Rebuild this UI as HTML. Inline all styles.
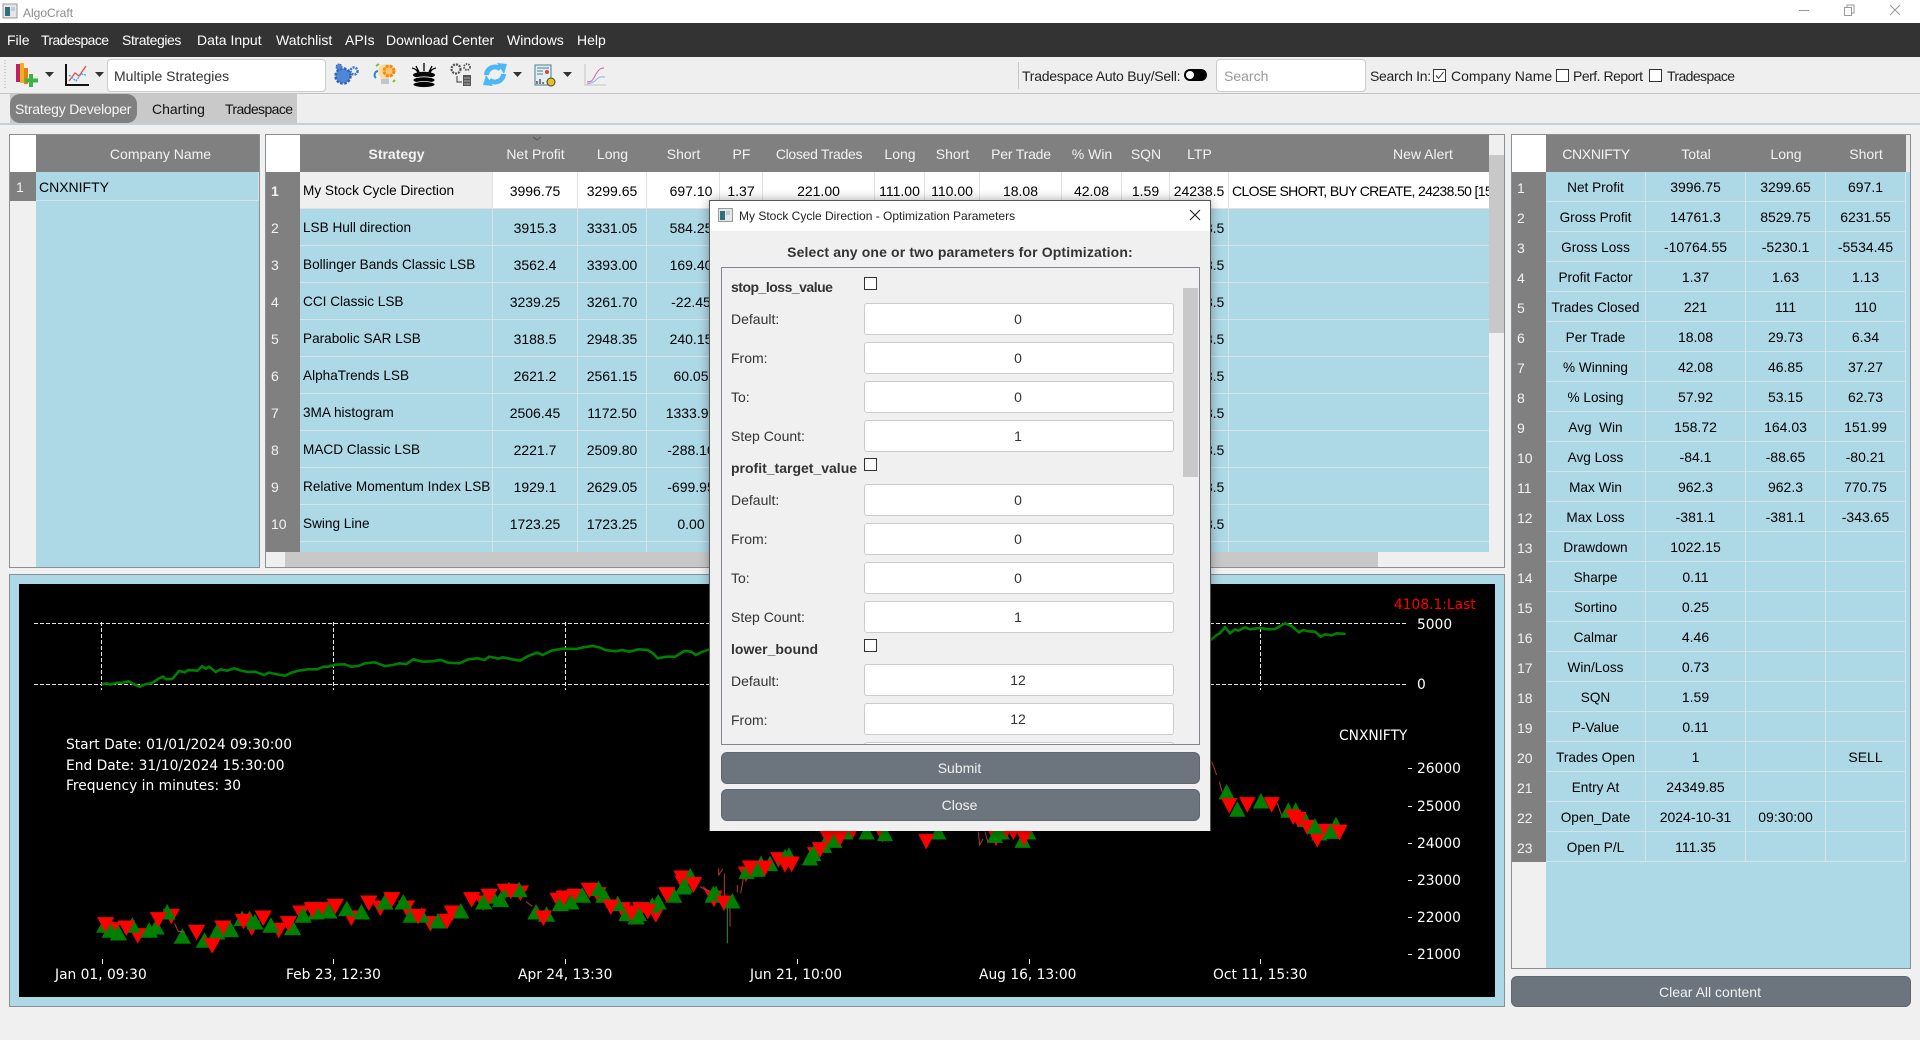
<!DOCTYPE html>
<html lang="en">
<head>
<meta charset="utf-8">
<title>AlgoCraft</title>
<style>
html,body{margin:0;padding:0;width:1920px;height:1040px;overflow:hidden;background:#f0f0f0;font-family:"Liberation Sans",sans-serif;font-size:14px;color:#000}
*{box-sizing:border-box}
.a{position:absolute;white-space:nowrap}
.m{position:absolute;top:32px;color:#fff;line-height:16px}
.t{position:absolute;line-height:16px;white-space:nowrap;color:#222}
table{border-collapse:separate;border-spacing:0;table-layout:fixed;position:absolute;left:0;top:0}
th{background:#808080;color:#f2f2f2;font-weight:normal;height:37px;padding:0;overflow:hidden;white-space:nowrap}
td{background:#add8e6;text-align:center;padding:1px 0 0;overflow:hidden;white-space:nowrap;border-right:1px solid #d6e4e9;border-bottom:1px solid #d6e4e9;color:#000}
td.h{background:#808080;color:#f2f2f2;text-align:left;padding-left:5px;border:0}
td.l{text-align:left;padding-left:3px;font-size:13.6px}
td.al{text-align:left;padding-left:3px;letter-spacing:-.65px}
.s td{height:37px}
.s td:nth-child(5){padding-left:16px}
.s tr.w td{background:#fff;border-color:#e2e2e2}
.s tr.w td.g{background:#efefef}
.s tr.w td.h{background:#808080;font-weight:bold}
.r td{height:30px}
.r td:nth-child(2){font-size:13.6px}
.d{position:absolute;background:#fff;border:1px solid #ccc;border-radius:3px;width:310px;height:32px;left:142px;padding-right:2px;text-align:center;line-height:31px;color:#333}
.lb{position:absolute;left:9px;color:#333;line-height:16px}
.b{font-weight:bold}
.c{position:absolute;left:142px;width:13px;height:13px;border:1px solid #333;background:#fff}
.btn{position:absolute;background:#6c757d;border:1px solid #5f666d;border-radius:6px;color:#f0f0f0;text-align:center;line-height:30px;height:32px;padding-right:2px}
.ck{position:absolute;top:69px;width:13px;height:13px;border:1px solid #333;background:#fff}
.ct{position:absolute;color:#fff;font-family:"DejaVu Sans",sans-serif;font-size:13.8px;line-height:16px;white-space:nowrap}
.tri path[fill="#f00"]{stroke:#f00;stroke-width:1;vector-effect:non-scaling-stroke}
.tri path[fill="#008000"]{stroke:#008000;stroke-width:1;vector-effect:non-scaling-stroke}
</style>
</head>
<body>

<!-- Title bar -->
<div class="a" style="left:0;top:0;width:1920px;height:28px;background:#fff"></div>
<svg class="a" style="left:0;top:0" width="1920" height="125" viewBox="0 0 1920 125">
  <rect x="3" y="4" width="14" height="14" fill="#e6e6e6" stroke="#999"/><rect x="5" y="7" width="5" height="9" fill="#2f6f7f"/><rect x="11" y="7" width="4" height="4" fill="#bcd"/>
  <path d="M1799 10.500h10" stroke="#999" fill="none"/>
  <path d="M1844.500 7.500h7v8h-7zM1847 7.500v-2.500h7v8h-2.500" stroke="#999" fill="none"/>
  <path d="M1890 5l10 10M1900 5l-10 10" stroke="#999" fill="none"/>
</svg>
<div class="a" style="left:23px;top:5px;font-size:12px;line-height:16px;color:#8a8a8a">AlgoCraft</div>
<div class="a" style="left:0;top:23px;width:1920px;height:34px;background:#333"></div>
<div class="m" style="left:7px">File</div>
<div class="m" style="left:41px;letter-spacing:-.6px">Tradespace</div>
<div class="m" style="left:122px;letter-spacing:-.4px">Strategies</div>
<div class="m" style="left:197px">Data Input</div>
<div class="m" style="left:276px">Watchlist</div>
<div class="m" style="left:345px">APIs</div>
<div class="m" style="left:386px">Download Center</div>
<div class="m" style="left:507px">Windows</div>
<div class="m" style="left:577px">Help</div>

<!-- Toolbar -->
<div class="a" style="left:0;top:57px;width:1920px;height:37px;background:#efefef;border-bottom:1px solid #c4c4c4"></div>
<div class="a" style="left:0;top:94px;width:1920px;height:29px;background:#eeeeee"></div>
<div class="a" style="left:0;top:123px;width:1920px;height:2px;background:#c8ced2"></div>
<div class="a" style="left:10px;top:94px;width:287px;height:29px;background:#c9c9c9"></div>
<div class="a" style="left:10px;top:94px;width:127px;height:29px;background:#808080;border-radius:10px"></div>
<div class="t" style="left:15px;top:101px;color:#f5f5f5;letter-spacing:-.2px">Strategy Developer</div>
<div class="t" style="left:152px;top:101px;color:#111">Charting</div>
<div class="t" style="left:225px;top:101px;color:#111;letter-spacing:-.6px">Tradespace</div>

<div class="a" style="left:107px;top:59px;width:219px;height:33px;background:#fff;border:1px solid #ccc;border-radius:4px"></div>
<div class="t" style="left:114px;top:68px;color:#333">Multiple Strategies</div>
<div class="a" style="left:1018px;top:62px;width:1px;height:27px;background:#c8c8c8"></div>
<div class="t" style="left:1022px;top:68px;letter-spacing:-.25px">Tradespace Auto Buy/Sell:</div>
<div class="a" style="left:1184px;top:69px;width:23px;height:12px;background:#000;border-radius:6px"></div>
<div class="a" style="left:1186px;top:71px;width:8px;height:8px;background:#fff;border-radius:50%"></div>
<div class="a" style="left:1216px;top:59px;width:150px;height:33px;background:#fff;border:1px solid #ccc;border-radius:4px"></div>
<div class="t" style="left:1224px;top:68px;color:#999">Search</div>
<div class="t" style="left:1370px;top:68px;letter-spacing:-.3px">Search In:</div>
<div class="ck" style="left:1433px"></div>
<svg class="a" style="left:1433px;top:69px" width="13" height="13"><path d="M3 6.500l2.500 3 5-6.500" stroke="#333" fill="none"/></svg>
<div class="t" style="left:1451px;top:68px">Company Name</div>
<div class="ck" style="left:1556px"></div>
<div class="t" style="left:1573px;top:68px;letter-spacing:-.5px">Perf. Report</div>
<div class="ck" style="left:1649px"></div>
<div class="t" style="left:1667px;top:68px;letter-spacing:-.6px">Tradespace</div>

<svg class="a" style="left:0;top:0" width="700" height="100" viewBox="0 0 700 100">
  <path d="M5 60v30" stroke="#aaa" stroke-dasharray="1 2" fill="none"/>
  <!-- bars plus -->
  <rect x="16" y="64" width="4" height="18" fill="#c0206a"/><rect x="20" y="63" width="4" height="20" fill="#e9b51b"/><rect x="24" y="68" width="4" height="16" fill="#ea7d20"/>
  <path d="M31 74v13M25 80.500h13" stroke="#3bb34a" stroke-width="4" fill="none"/>
  <path d="M45 72h9l-4.500 5zM95 72h9l-4.500 5zM513 72h9l-4.500 5zM563 72h9l-4.500 5z" fill="#333"/>
  <!-- line chart -->
  <path d="M66 64v21h23" stroke="#111" stroke-width="2" fill="none"/>
  <path d="M69 81l6-8 4 3 7-10" stroke="#e34b4b" stroke-width="1.300" fill="none"/>
  <path d="M69 75l7 6 5-7 5 1" stroke="#3aa5e0" stroke-width="1.300" stroke-dasharray="2 1" fill="none"/>
  <!-- gears blue -->
  <circle cx="343" cy="76" r="7.500" fill="#4f86d6" stroke="#2f63b8" stroke-width="2.500" stroke-dasharray="2.500 1.500"/>
  <circle cx="339" cy="67" r="3" fill="#4f86d6" stroke="#2f63b8" stroke-dasharray="1.500 1"/>
  <circle cx="354" cy="71" r="3.500" fill="#efefef" stroke="#3c74c8" stroke-width="2.500" stroke-dasharray="2 1"/>
  <!-- bulb -->
  <path d="M378 71a7 7 0 0 1 14 0c0 4-3 5-3 8h-8c0-3-3-4-3-8z" fill="#f6dca0"/>
  <rect x="381" y="79" width="8" height="5" fill="#bfc6d0"/>
  <circle cx="389" cy="71" r="5" fill="#ffc266" stroke="#ee8a1a" stroke-width="3" stroke-dasharray="3 1"/>
  <path d="M378 71a4 4 0 0 0-2 7" stroke="#2e86d0" stroke-width="2" fill="none"/>
  <path d="M376 66l3-2M393 82l2-2" stroke="#7bbf3a" stroke-width="2" fill="none"/>
  <!-- db crown -->
  <path d="M424 63v8M416 66q2 4 3 6M432 66q-2 4-3 6M412 68q5 1 6 5M436 68q-5 1-6 5" stroke="#000" stroke-width="1.300" fill="none"/>
  <ellipse cx="424" cy="75" rx="11" ry="3.200" fill="#000"/>
  <ellipse cx="424" cy="80" rx="11" ry="3.200" fill="#000" stroke="#efefef" stroke-width=".8"/>
  <ellipse cx="424" cy="84.500" rx="11" ry="3" fill="#000" stroke="#efefef" stroke-width=".8"/>
  <!-- gears calc -->
  <circle cx="456" cy="69" r="4.500" fill="none" stroke="#555" stroke-width="2.200" stroke-dasharray="2 1"/>
  <circle cx="467" cy="67" r="3" fill="none" stroke="#555" stroke-width="1.800" stroke-dasharray="1.500 1"/>
  <path d="M457 76v6h5" stroke="#333" fill="none"/>
  <rect x="463" y="75" width="8" height="11" fill="#555"/><path d="M464 78h6M464 81h6M464 84h6" stroke="#ccc" stroke-width=".8"/>
  <!-- refresh -->
  <path d="M486.500 75a8.500 8.500 0 0 1 14-6" stroke="#4db6f7" stroke-width="5" fill="none"/><path d="M497 63l10 1-3 10z" fill="#4db6f7"/>
  <path d="M503.500 74a8.500 8.500 0 0 1-14 6" stroke="#4db6f7" stroke-width="5" fill="none"/><path d="M493 86l-10-1 3-10z" fill="#4db6f7"/>
  <!-- report -->
  <rect x="535" y="65" width="16" height="20" fill="#e3eef2" stroke="#4d7e8c"/>
  <path d="M537 68h12M537 71h6M537 74h6" stroke="#4d7e8c"/><circle cx="547" cy="72" r="2" fill="#d6463c"/>
  <path d="M537 84v-3M540 84v-5M543 84v-2" stroke="#555" stroke-width="1.500"/>
  <circle cx="551" cy="82" r="4" fill="#e8c21c" stroke="#444"/>
  <!-- faint chart -->
  <path d="M585 64v21h21" stroke="#c4c4c4" fill="none"/>
  <path d="M587 82c6 0 6-3 9-8s5-6 8-6" stroke="#c763a8" fill="none"/>
  <path d="M587 84c5-1 7-2 10-5s5-2 8-2" stroke="#8db4ea" fill="none"/>
</svg>

<!-- Left table -->
<div class="a" style="left:9px;top:134px;width:251px;height:434px;background:#add8e6;border:1px solid #8a8f94;overflow:hidden">
  <div class="a" style="left:0;top:0;width:26px;height:432px;background:#f0f0f0"></div>
  <table style="width:249px">
    <colgroup><col style="width:26px"><col style="width:223px"></colgroup>
    <tr><th style="background:#fff"></th><th style="padding-left:26px">Company Name</th></tr>
    <tr><td class="h" style="height:29px;padding-left:6px">1</td><td class="l" style="height:29px;padding-left:3px;font-size:14px">CNXNIFTY</td></tr>
  </table>
</div>

<!-- Strategy table -->
<div class="a" style="left:265px;top:134px;width:1240px;height:434px;background:#efefef;border:1px solid #8a8f94;overflow:hidden">
  <div class="a s" style="left:0;top:0;width:1223px;height:417px;overflow:hidden;background:#add8e6">
  <table style="width:1351px">
    <colgroup><col style="width:34px"><col style="width:193px"><col style="width:85px"><col style="width:69px"><col style="width:73px"><col style="width:43px"><col style="width:112px"><col style="width:50px"><col style="width:55px"><col style="width:82px"><col style="width:60px"><col style="width:48px"><col style="width:59px"><col style="width:388px"></colgroup>
    <tr><th style="background:#fff"></th><th class="b" style="font-weight:bold">Strategy</th><th>Net Profit</th><th>Long</th><th>Short</th><th>PF</th><th style="letter-spacing:-.3px">Closed Trades</th><th>Long</th><th>Short</th><th style="letter-spacing:-.2px">Per Trade</th><th>% Win</th><th>SQN</th><th>LTP</th><th>New Alert</th></tr>
    <tr class="w"><td class="h">1</td><td class="l g">My Stock Cycle Direction</td><td>3996.75</td><td>3299.65</td><td>697.10</td><td>1.37</td><td>221.00</td><td>111.00</td><td>110.00</td><td>18.08</td><td>42.08</td><td>1.59</td><td>24238.5</td><td class="al">CLOSE SHORT, BUY CREATE, 24238.50 [15:30:00]</td></tr>
    <tr><td class="h">2</td><td class="l">LSB Hull direction</td><td>3915.3</td><td>3331.05</td><td>584.25</td><td></td><td></td><td></td><td></td><td></td><td></td><td></td><td>24238.5</td><td></td></tr>
    <tr><td class="h">3</td><td class="l">Bollinger Bands Classic LSB</td><td>3562.4</td><td>3393.00</td><td>169.40</td><td></td><td></td><td></td><td></td><td></td><td></td><td></td><td>24238.5</td><td></td></tr>
    <tr><td class="h">4</td><td class="l">CCI Classic LSB</td><td>3239.25</td><td>3261.70</td><td>-22.45</td><td></td><td></td><td></td><td></td><td></td><td></td><td></td><td>24238.5</td><td></td></tr>
    <tr><td class="h">5</td><td class="l">Parabolic SAR LSB</td><td>3188.5</td><td>2948.35</td><td>240.15</td><td></td><td></td><td></td><td></td><td></td><td></td><td></td><td>24238.5</td><td></td></tr>
    <tr><td class="h">6</td><td class="l">AlphaTrends LSB</td><td>2621.2</td><td>2561.15</td><td>60.05</td><td></td><td></td><td></td><td></td><td></td><td></td><td></td><td>24238.5</td><td></td></tr>
    <tr><td class="h">7</td><td class="l">3MA histogram</td><td>2506.45</td><td>1172.50</td><td>1333.95</td><td></td><td></td><td></td><td></td><td></td><td></td><td></td><td>24238.5</td><td></td></tr>
    <tr><td class="h">8</td><td class="l">MACD Classic LSB</td><td>2221.7</td><td>2509.80</td><td>-288.10</td><td></td><td></td><td></td><td></td><td></td><td></td><td></td><td>24238.5</td><td></td></tr>
    <tr><td class="h">9</td><td class="l">Relative Momentum Index LSB</td><td>1929.1</td><td>2629.05</td><td>-699.95</td><td></td><td></td><td></td><td></td><td></td><td></td><td></td><td>24238.5</td><td></td></tr>
    <tr><td class="h">10</td><td class="l">Swing Line</td><td>1723.25</td><td>1723.25</td><td>0.00</td><td></td><td></td><td></td><td></td><td></td><td></td><td></td><td>24238.5</td><td></td></tr>
    <tr><td class="h"></td><td></td><td></td><td></td><td></td><td></td><td></td><td></td><td></td><td></td><td></td><td></td><td></td><td></td></tr>
  </table>
  </div>
  <svg class="a" style="left:266px;top:1px" width="12" height="6"><path d="M1 1l4 3 4-3" stroke="#555" fill="none"/></svg>
  <div class="a" style="left:1223px;top:20px;width:15px;height:178px;background:#c8c8c8"></div>
  <div class="a" style="left:19px;top:417px;width:1093px;height:15px;background:#c8c8c8"></div>
</div>

<!-- Right table -->
<div class="a r" style="left:1511px;top:134px;width:400px;height:835px;background:#add8e6;border:1px solid #8a8f94;overflow:hidden">
  <div class="a" style="left:0;top:0;width:34px;height:833px;background:#f0f0f0"></div>
  <div class="a" style="left:393px;top:0;width:5px;height:37px;background:#e8e8e8"></div>
  <table style="width:394px">
    <colgroup><col style="width:34px"><col style="width:100px"><col style="width:100px"><col style="width:80px"><col style="width:80px"></colgroup>
    <tr><th style="background:#fff"></th><th style="letter-spacing:-.3px">CNXNIFTY</th><th>Total</th><th>Long</th><th>Short</th></tr>
    <tr><td class="h">1</td><td>Net Profit</td><td>3996.75</td><td>3299.65</td><td>697.1</td></tr>
    <tr><td class="h">2</td><td>Gross Profit</td><td>14761.3</td><td>8529.75</td><td>6231.55</td></tr>
    <tr><td class="h">3</td><td>Gross Loss</td><td>-10764.55</td><td>-5230.1</td><td>-5534.45</td></tr>
    <tr><td class="h">4</td><td>Profit Factor</td><td>1.37</td><td>1.63</td><td>1.13</td></tr>
    <tr><td class="h">5</td><td>Trades Closed</td><td>221</td><td>111</td><td>110</td></tr>
    <tr><td class="h">6</td><td>Per Trade</td><td>18.08</td><td>29.73</td><td>6.34</td></tr>
    <tr><td class="h">7</td><td>% Winning</td><td>42.08</td><td>46.85</td><td>37.27</td></tr>
    <tr><td class="h">8</td><td>% Losing</td><td>57.92</td><td>53.15</td><td>62.73</td></tr>
    <tr><td class="h">9</td><td>Avg&nbsp; Win</td><td>158.72</td><td>164.03</td><td>151.99</td></tr>
    <tr><td class="h">10</td><td>Avg Loss</td><td>-84.1</td><td>-88.65</td><td>-80.21</td></tr>
    <tr><td class="h">11</td><td>Max Win</td><td>962.3</td><td>962.3</td><td>770.75</td></tr>
    <tr><td class="h">12</td><td>Max Loss</td><td>-381.1</td><td>-381.1</td><td>-343.65</td></tr>
    <tr><td class="h">13</td><td>Drawdown</td><td>1022.15</td><td></td><td></td></tr>
    <tr><td class="h">14</td><td>Sharpe</td><td>0.11</td><td></td><td></td></tr>
    <tr><td class="h">15</td><td>Sortino</td><td>0.25</td><td></td><td></td></tr>
    <tr><td class="h">16</td><td>Calmar</td><td>4.46</td><td></td><td></td></tr>
    <tr><td class="h">17</td><td>Win/Loss</td><td>0.73</td><td></td><td></td></tr>
    <tr><td class="h">18</td><td>SQN</td><td>1.59</td><td></td><td></td></tr>
    <tr><td class="h">19</td><td>P-Value</td><td>0.11</td><td></td><td></td></tr>
    <tr><td class="h">20</td><td>Trades Open</td><td>1</td><td></td><td>SELL</td></tr>
    <tr><td class="h">21</td><td>Entry At</td><td>24349.85</td><td></td><td></td></tr>
    <tr><td class="h">22</td><td>Open_Date</td><td>2024-10-31</td><td>09:30:00</td><td></td></tr>
    <tr><td class="h">23</td><td>Open P/L</td><td>111.35</td><td></td><td></td></tr>
  </table>
</div>
<div class="btn" style="left:1511px;top:976px;width:400px;height:31px;line-height:30px">Clear All content</div>

<!-- Chart -->
<div class="a" style="left:9px;top:574px;width:1496px;height:433px;background:#add8e6;border:1px solid #8a8f94"></div>
<div class="a" style="left:19px;top:584px;width:1476px;height:413px;background:#000"></div>
<svg class="a tri" style="left:0;top:570px" width="1500" height="430" viewBox="0 0 1500 430">
  <!-- gridlines -->
  <g stroke="#e8e8e8" stroke-width="1" stroke-dasharray="4 2" fill="none">
    <path d="M34 53.500H1407M34 114.500H1407"/>
    <path d="M101.500 52V120M333.500 52V120M565.500 52V120M797.500 52V120M1029.500 52V120M1260.500 52V120"/>
  </g>
  <path d="M102.500 389v5M333.500 389v5M565.500 389v5M797.500 389v5M1029.500 389v5M1260.500 389v5" stroke="#eee" fill="none"/>
  <path d="M1408 198.500h4M1408 236.500h4M1408 273.500h4M1408 310.500h4M1408 347.500h4M1408 384.500h4" stroke="#eee" fill="none"/>
  <!-- equity, zoom-6 coords -->
  <g transform="scale(.4593 .3333)" fill="none">
    <polyline vector-effect="non-scaling-stroke" stroke="#008000" stroke-width="2.600" points="221,343 232,340 240,344 255,338 265,339 280,334 290,342 305,350 318,342 330,340 345,326 355,320 362,328 375,327 390,303 402,307 410,300 430,302 440,289 448,296 455,290 470,306 480,298 495,302 510,295 525,302 540,306 555,305 575,315 585,308 600,312 620,317 635,308 650,302 670,298 690,298 705,290 715,290 730,284 750,283 765,290 780,288 795,280 815,277 838,288 855,285 870,280 885,282 900,268 920,275 940,274 960,270 975,278 1000,280 1020,268 1040,265 1055,270 1065,260 1085,266 1095,262 1115,268 1132,272 1150,258 1170,248 1182,255 1200,242 1225,236 1255,237 1270,232 1290,228 1305,232 1318,240 1340,244 1355,240 1370,245 1390,238 1410,240 1422,250 1432,265 1450,260 1470,260 1490,243 1505,245 1515,255 1530,245 1545,238"/>
  </g>
  <g transform="translate(1200 0) scale(.3333)" fill="none">
    <polyline vector-effect="non-scaling-stroke" stroke="#008000" stroke-width="2.600" points="32,210 50,195 60,190 75,172 90,190 105,178 115,182 135,172 150,178 180,174 205,178 225,177 255,160 275,168 297,187 310,180 325,184 345,185 362,200 375,193 395,196 410,190 437,192"/>
    <path vector-effect="non-scaling-stroke" d="M35 575l15 40M58 635l8 30M232 700l14 40" stroke="#b33a3a" stroke-width="1"/>
  </g>
  <!-- zoom-6 triangles -->
  <g transform="scale(.4593 .3333)">
    <path fill="#f00" d="M245 1100l-17-42h34zM300 1118l-17-42h34zM373 1060l-17-42h34zM485 1095l-17-42h34zM548 1095l-17-42h34zM607 1102l-17-42h34zM655 1050l-17-42h34zM700 1040l-17-42h34zM765 1065l-17-42h34zM828 1035l-17-42h34zM885 1035l-17-42h34zM937 1082l-17-42h34zM985 1050l-17-42h34zM1052 1020l-17-42h34zM1100 985l-17-42h34zM1133 990l-17-42h34zM1215 1012l-17-42h34zM1252 1000l-17-42h34zM1302 995l-17-42h34zM1355 1040l-17-42h34zM1395 1040l-17-42h34zM1428 1055l-17-42h34zM1485 945l-17-42h34zM1553 1005l-17-42h34z"/>
    <path fill="#008000" d="M228 1045l17 42h-34zM240 1060l17 42h-34zM258 1068l17 42h-34zM288 1045l17 42h-34zM325 1060l17 42h-34zM340 1050l17 42h-34zM364 1005l17 42h-34zM397 1078l17 42h-34zM445 1090l17 42h-34zM472 1065l17 42h-34zM502 1058l17 42h-34zM527 1025l17 42h-34zM543 1025l17 42h-34zM555 1035l17 42h-34zM590 1045l17 42h-34zM637 1052l17 42h-34zM660 1015l17 42h-34zM688 1005l17 42h-34zM716 1002l17 42h-34zM755 995l17 42h-34zM787 1005l17 42h-34zM838 975l17 42h-34zM878 975l17 42h-34zM895 1015l17 42h-34zM918 1015l17 42h-34zM953 1032l17 42h-34zM1003 1002l17 42h-34zM1053 975l17 42h-34zM1072 958l17 42h-34zM1090 968l17 42h-34zM1108 938l17 42h-34zM1130 938l17 42h-34zM1167 1005l17 42h-34zM1190 1012l17 42h-34zM1220 980l17 42h-34zM1243 975l17 42h-34zM1268 955l17 42h-34zM1303 935l17 42h-34zM1315 955l17 42h-34zM1345 980l17 42h-34zM1365 1010l17 42h-34zM1385 1020l17 42h-34zM1390 1010l17 42h-34zM1420 985l17 42h-34zM1433 975l17 42h-34zM1467 955l17 42h-34zM1490 925l17 42h-34zM1503 898l17 42h-34zM1553 955l17 42h-34z"/>
    <path fill="#f00" d="M230 1085l-17-42h34zM275 1095l-17-42h34zM345 1070l-17-42h34zM428 1108l-17-42h34zM462 1148l-17-42h34zM530 1075l-17-42h34zM573 1065l-17-42h34zM628 1082l-17-42h34zM680 1040l-17-42h34zM730 1030l-17-42h34zM803 1020l-17-42h34zM853 1010l-17-42h34zM910 1060l-17-42h34zM973 1075l-17-42h34zM1027 1010l-17-42h34zM1065 1000l-17-42h34zM1112 985l-17-42h34zM1183 1065l-17-42h34zM1228 1005l-17-42h34zM1283 982l-17-42h34zM1330 1032l-17-42h34zM1375 1050l-17-42h34zM1410 1045l-17-42h34zM1452 995l-17-42h34zM1510 965l-17-42h34z"/>
    <path vector-effect="non-scaling-stroke" d="M380 1060l8 24 14 2M1145 995l14 14M1530 950l14 14" stroke="#b33a3a" stroke-width="1" fill="none"/>
  </g>
  <!-- zoom-12 triangles -->
  <g transform="translate(680 255) scale(.3333)">
    <path vector-effect="non-scaling-stroke" d="M142 250v105" stroke="#2d8a5a" stroke-width="1" fill="none"/>
    <path vector-effect="non-scaling-stroke" d="M150 250v55M133 145v70M116 130v22M128 132l-12 18M60 185l20 12M172 180v22M182 205l8-45" stroke="#b33a3a" stroke-width="1" fill="none"/>
    <path fill="#f00" d="M8 195l-22-42h44zM102 243l-22-42h44zM198 168l-22-42h44zM240 152l-22-42h44zM295 125l-22-42h44zM405 110l-22-42h44zM443 60l-22-42h44zM517 40l-22-42h44zM607 50l-22-42h44zM948 60l-22-42h44zM1000 42l-22-42h44z"/>
    <path fill="#008000" d="M10 165l22 42h-44zM30 133l22 42h-44zM100 185l22 42h-44zM108 185l22 42h-44zM200 118l22 42h-44zM232 112l22 42h-44zM243 95l22 42h-44zM270 95l22 42h-44zM315 75l22 42h-44zM327 70l22 42h-44zM390 78l22 42h-44zM400 65l22 42h-44zM432 40l22 42h-44zM463 25l22 42h-44zM495 0l22 42h-44zM560 0l22 42h-44zM615 5l22 42h-44zM775 0l22 42h-44zM945 10l22 42h-44zM965 0l22 42h-44zM1028 25l22 42h-44zM1045 0l22 42h-44z"/>
    <path fill="#f00" d="M40 200l-22-42h44zM132 255l-22-42h44zM210 150l-22-42h44zM255 150l-22-42h44zM315 140l-22-42h44zM335 138l-22-42h44zM420 95l-22-42h44zM480 60l-22-42h44zM739 70l-22-42h44zM1032 60l-22-42h44zM980 35l-22-42h44z"/>
    <path fill="#008000" d="M157 207l22 42h-44z"/>
    <path vector-effect="non-scaling-stroke" d="M895 20l4 40 10-18M915 20l8 30" stroke="#b33a3a" stroke-width="1" fill="none"/>
  </g>
  <!-- zoom-7 triangles -->
  <g transform="translate(1200 0) scale(.3333)">
    <path fill="#008000" d="M80 645l22 42h-44zM112 697l22 42h-44zM183 672l22 42h-44zM265 700l22 42h-44zM287 700l22 42h-44zM315 728l22 42h-44zM345 748l22 42h-44zM358 768l22 42h-44zM392 763l22 42h-44zM408 743l22 42h-44z"/>
    <path fill="#f00" d="M88 728l-22-42h44zM142 725l-22-42h44zM215 725l-22-42h44zM280 762l-22-42h44zM295 770l-22-42h44zM322 793l-22-42h44zM352 830l-22-42h44zM375 805l-22-42h44zM418 808l-22-42h44z"/>
    <path fill="#008000" d="M345 748l22 42h-44zM392 763l22 42h-44z"/>
    <path fill="#f00" d="M418 808l-22-42h44z"/>
  </g>
</svg>

<div class="ct" style="left:66px;top:737px">Start Date: 01/01/2024 09:30:00</div>
<div class="ct" style="left:66px;top:758px">End Date: 31/10/2024 15:30:00</div>
<div class="ct" style="left:66px;top:778px">Frequency in minutes: 30</div>
<div class="ct" style="left:55px;top:967px">Jan 01, 09:30</div>
<div class="ct" style="left:286px;top:967px">Feb 23, 12:30</div>
<div class="ct" style="left:518px;top:967px">Apr 24, 13:30</div>
<div class="ct" style="left:750px;top:967px">Jun 21, 10:00</div>
<div class="ct" style="left:979px;top:967px">Aug 16, 13:00</div>
<div class="ct" style="left:1213px;top:967px">Oct 11, 15:30</div>
<div class="ct" style="left:1394px;top:597px;color:#f00">4108.1:Last</div>
<div class="ct" style="left:1417px;top:617px">5000</div>
<div class="ct" style="left:1417px;top:677px">0</div>
<div class="ct" style="left:1339px;top:728px">CNXNIFTY</div>
<div class="ct" style="left:1417px;top:761px">26000</div>
<div class="ct" style="left:1417px;top:799px">25000</div>
<div class="ct" style="left:1417px;top:836px">24000</div>
<div class="ct" style="left:1417px;top:873px">23000</div>
<div class="ct" style="left:1417px;top:910px">22000</div>
<div class="ct" style="left:1417px;top:947px">21000</div>

<!-- Dialog -->
<div class="a" style="left:709px;top:200px;width:502px;height:631px;background:#f0f0f0;border:1px solid #555;border-bottom:0;box-shadow:0 0 10px rgba(0,0,0,.35)">
  <div class="a" style="left:0;top:0;width:500px;height:30px;background:#fff"></div>
  <svg class="a" style="left:8px;top:7px" width="16" height="15"><rect x=".5" y=".5" width="14" height="13" fill="#e6e6e6" stroke="#999"/><rect x="2" y="3" width="5" height="9" fill="#2f6f7f"/><rect x="8" y="3" width="4" height="4" fill="#bcd"/></svg>
  <div class="a" style="left:29px;top:7px;font-size:12px;line-height:16px;color:#222">My Stock Cycle Direction - Optimization Parameters</div>
  <svg class="a" style="left:479px;top:8px" width="12" height="12"><path d="M1 1l10 10M11 1L1 11" stroke="#222" stroke-width="1.100" fill="none"/></svg>
  <div class="a b" style="left:0;top:43px;width:500px;text-align:center;line-height:16px;color:#333;letter-spacing:.13px">Select any one or two parameters for Optimization:</div>

  <div class="a" style="left:11px;top:66px;width:479px;height:478px;border:1px solid #808590;overflow:hidden">
    <div class="a" style="left:461px;top:20px;width:15px;height:189px;background:#c8c8c8"></div>

    <div class="lb b" style="top:11px;letter-spacing:-.5px">stop_loss_value</div><div class="c" style="top:9px"></div>
    <div class="lb" style="top:43px">Default:</div><div class="d" style="top:35px">0</div>
    <div class="lb" style="top:82px">From:</div><div class="d" style="top:74px">0</div>
    <div class="lb" style="top:121px">To:</div><div class="d" style="top:113px">0</div>
    <div class="lb" style="top:160px">Step Count:</div><div class="d" style="top:152px">1</div>

    <div class="lb b" style="top:192px">profit_target_value</div><div class="c" style="top:190px"></div>
    <div class="lb" style="top:224px">Default:</div><div class="d" style="top:216px">0</div>
    <div class="lb" style="top:263px">From:</div><div class="d" style="top:255px">0</div>
    <div class="lb" style="top:302px">To:</div><div class="d" style="top:294px">0</div>
    <div class="lb" style="top:341px">Step Count:</div><div class="d" style="top:333px">1</div>

    <div class="lb b" style="top:373px">lower_bound</div><div class="c" style="top:371px"></div>
    <div class="lb" style="top:405px">Default:</div><div class="d" style="top:396px">12</div>
    <div class="lb" style="top:444px">From:</div><div class="d" style="top:435px">12</div>
    <div class="d" style="top:474px"></div>
  </div>

  <div class="btn" style="left:11px;top:551px;width:479px">Submit</div>
  <div class="btn" style="left:11px;top:588px;width:479px">Close</div>
</div>

</body>
</html>
